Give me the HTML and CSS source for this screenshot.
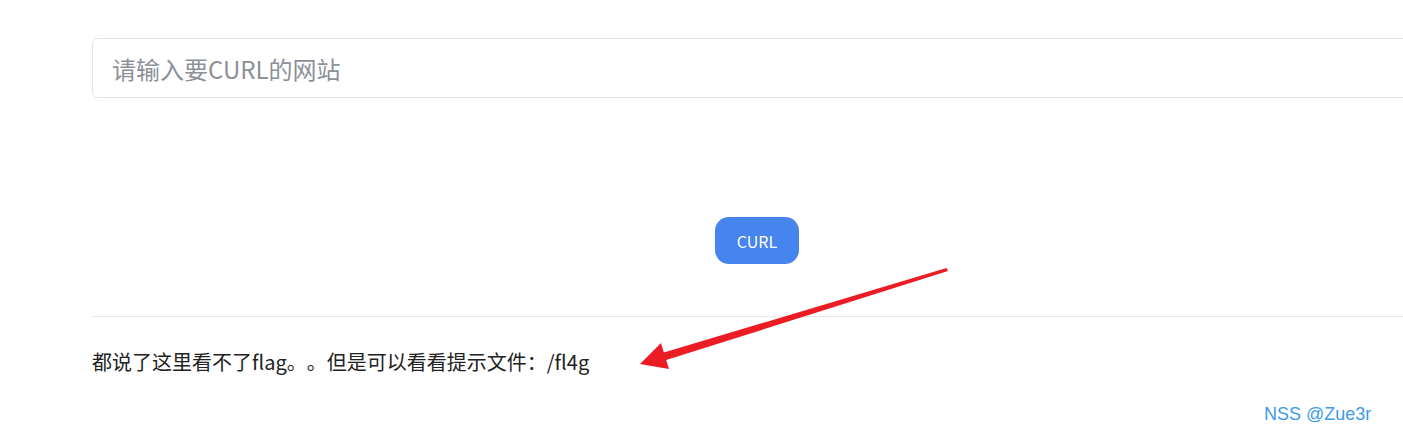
FILE: index.html
```html
<!DOCTYPE html>
<html lang="zh-CN">

<head>
    <meta charset="UTF-8">
    <meta name="viewport" content="width=device-width, initial-scale=1.0">
    <title>CURL</title>
    <link rel="stylesheet" href="styles.css">
</head>

<body>
    <div class="container">
        <form class="curl-form">
            <input type="text" class="url-input" name="url" placeholder="请输入要CURL的网站">
            <div class="btn-row">
                <button type="button" class="curl-btn">CURL</button>
            </div>
        </form>

        <hr class="divider">

        <p class="hint">都说了这里看不了flag。。但是可以看看提示文件：/fl4g</p>
    </div>

    <!-- 截图上的标注箭头 -->
    <svg class="arrow" width="1403" height="425" viewBox="0 0 1403 425">
        <polygon points="946.5,268 948,271 666.2,360.1 669,369 640,364 661,343 663.8,352.5" fill="#ec1c24" />
    </svg>

    <div class="watermark">NSS @Zue3r</div>
</body>

</html>
```

FILE: styles.css
```css
body {
    font-family: "Noto Sans CJK SC", "Liberation Sans", sans-serif;
    background-color: #fff;
    margin: 0;
    padding: 0;
    overflow: hidden;
    width: 1403px;
    height: 425px;
    position: relative;
}

.container {
    width: 1330px;
    margin-left: 92px;
    padding-top: 38px;
}

.curl-form {
    margin: 0;
}

.url-input {
    display: block;
    box-sizing: border-box;
    width: 100%;
    height: 60px;
    padding: 0 19px;
    border: 1px solid #e6e6e6;
    border-radius: 6px;
    font-family: "Noto Sans CJK SC", sans-serif;
    font-size: 24px;
    color: #333;
    outline: none;
}

.url-input::placeholder {
    color: #8c9099;
}

.btn-row {
    display: flex;
    justify-content: center;
    margin-top: 119px;
}

.curl-btn {
    width: 84px;
    height: 47px;
    background-color: #4684ee;
    color: #fff;
    border: none;
    border-radius: 14px;
    font-family: "Noto Sans CJK SC", sans-serif;
    font-size: 16px;
    cursor: pointer;
}

.divider {
    border: none;
    border-top: 1px solid #e8e8e8;
    margin: 52px 0 0;
}

.hint {
    margin: 31px 0 0;
    font-size: 20px;
    line-height: 28px;
    color: #222;
    text-spacing-trim: space-all;
}

/* 标注层 */
.arrow {
    position: absolute;
    left: 0;
    top: 0;
    pointer-events: none;
}

.watermark {
    position: absolute;
    left: 1264px;
    top: 404px;
    font-family: "Liberation Sans", Arial, sans-serif;
    font-size: 18px;
    color: #3d9be8;
}
```
